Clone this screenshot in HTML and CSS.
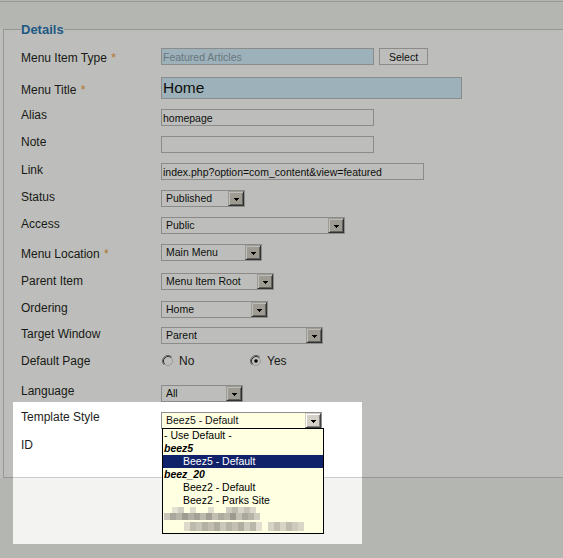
FILE: index.html
```html
<!DOCTYPE html>
<html lang="en">
<head>
<meta charset="utf-8">
<title>Menu Item: Details</title>
<link rel="stylesheet" href="styles.css">
</head>
<body>
<div class="topband"></div>
<div class="content">
  <fieldset class="details">
    <legend>Details</legend>
    <div class="form">
      <div class="lbl">Menu Item Type <span class="star">*</span></div>
      <div class="fld up3"><input class="inp readonly w-type" type="text" value="Featured Articles" readonly><button class="btn" type="button">Select</button></div>

      <div class="lbl">Menu Title <span class="star">*</span></div>
      <div class="fld up6"><input class="inp readonly title" type="text" value="Home"></div>

      <div class="lbl">Alias</div>
      <div class="fld dn1"><input class="inp w-type" type="text" value="homepage"></div>

      <div class="lbl">Note</div>
      <div class="fld dn1"><input class="inp w-type" type="text" value=""></div>

      <div class="lbl">Link</div>
      <div class="fld"><input class="inp w-link" type="text" value="index.php?option=com_content&amp;view=featured"></div>

      <div class="lbl">Status</div>
      <div class="fld"><div class="sel w-status"><span class="txt">Published</span><span class="arrow"><svg width="5" height="3" viewBox="0 0 5 3" shape-rendering="crispEdges"><rect x="0" y="0" width="5" height="1"/><rect x="1" y="1" width="3" height="1"/><rect x="2" y="2" width="1" height="1"/></svg></span></div></div>

      <div class="lbl">Access</div>
      <div class="fld"><div class="sel w-access"><span class="txt">Public</span><span class="arrow"><svg width="5" height="3" viewBox="0 0 5 3" shape-rendering="crispEdges"><rect x="0" y="0" width="5" height="1"/><rect x="1" y="1" width="3" height="1"/><rect x="2" y="2" width="1" height="1"/></svg></span></div></div>

      <div class="lbl">Menu Location <span class="star">*</span></div>
      <div class="fld up3"><div class="sel w-location"><span class="txt">Main Menu</span><span class="arrow"><svg width="5" height="3" viewBox="0 0 5 3" shape-rendering="crispEdges"><rect x="0" y="0" width="5" height="1"/><rect x="1" y="1" width="3" height="1"/><rect x="2" y="2" width="1" height="1"/></svg></span></div></div>

      <div class="lbl">Parent Item</div>
      <div class="fld up1"><div class="sel w-parent"><span class="txt">Menu Item Root</span><span class="arrow"><svg width="5" height="3" viewBox="0 0 5 3" shape-rendering="crispEdges"><rect x="0" y="0" width="5" height="1"/><rect x="1" y="1" width="3" height="1"/><rect x="2" y="2" width="1" height="1"/></svg></span></div></div>

      <div class="lbl">Ordering</div>
      <div class="fld"><div class="sel w-ordering"><span class="txt">Home</span><span class="arrow"><svg width="5" height="3" viewBox="0 0 5 3" shape-rendering="crispEdges"><rect x="0" y="0" width="5" height="1"/><rect x="1" y="1" width="3" height="1"/><rect x="2" y="2" width="1" height="1"/></svg></span></div></div>

      <div class="lbl">Target Window</div>
      <div class="fld"><div class="sel w-target"><span class="txt">Parent</span><span class="arrow"><svg width="5" height="3" viewBox="0 0 5 3" shape-rendering="crispEdges"><rect x="0" y="0" width="5" height="1"/><rect x="1" y="1" width="3" height="1"/><rect x="2" y="2" width="1" height="1"/></svg></span></div></div>

      <div class="lbl">Default Page</div>
      <div class="fld radios">
        <span class="opt"><svg class="radio" width="12" height="12" viewBox="0 0 12 12"><circle cx="6" cy="6" r="4.5" fill="#fff"/><path d="M9.89 2.11A5.5 5.5 0 0 0 2.11 9.89" fill="none" stroke="#808080"/><path d="M2.11 9.89A5.5 5.5 0 0 0 9.89 2.11" fill="none" stroke="#fff"/><path d="M9.18 2.82A4.5 4.5 0 0 0 2.82 9.18" fill="none" stroke="#404040"/><path d="M2.82 9.18A4.5 4.5 0 0 0 9.18 2.82" fill="none" stroke="#d4d0c8"/></svg>No</span>
        <span class="opt"><svg class="radio" width="12" height="12" viewBox="0 0 12 12"><circle cx="6" cy="6" r="4.5" fill="#fff"/><path d="M9.89 2.11A5.5 5.5 0 0 0 2.11 9.89" fill="none" stroke="#808080"/><path d="M2.11 9.89A5.5 5.5 0 0 0 9.89 2.11" fill="none" stroke="#fff"/><path d="M9.18 2.82A4.5 4.5 0 0 0 2.82 9.18" fill="none" stroke="#404040"/><path d="M2.82 9.18A4.5 4.5 0 0 0 9.18 2.82" fill="none" stroke="#d4d0c8"/><circle cx="6" cy="6" r="1.8" fill="#000"/></svg>Yes</span>
      </div>

      <div class="lbl">Language</div>
      <div class="fld dn1"><div class="sel w-language"><span class="txt">All</span><span class="arrow"><svg width="5" height="3" viewBox="0 0 5 3" shape-rendering="crispEdges"><rect x="0" y="0" width="5" height="1"/><rect x="1" y="1" width="3" height="1"/><rect x="2" y="2" width="1" height="1"/></svg></span></div></div>

      <div class="lbl">Template Style</div>
      <div class="fld dn2 tpl">
        <div class="sel open w-template"><span class="txt">Beez5 - Default</span><span class="arrow"><svg width="5" height="3" viewBox="0 0 5 3" shape-rendering="crispEdges"><rect x="0" y="0" width="5" height="1"/><rect x="1" y="1" width="3" height="1"/><rect x="2" y="2" width="1" height="1"/></svg></span></div>
        <div class="dropdown">
          <div class="item">- Use Default -</div>
          <div class="item group">beez5</div>
          <div class="item child selected">Beez5 - Default</div>
          <div class="item group">beez_20</div>
          <div class="item child">Beez2 - Default</div>
          <div class="item child">Beez2 - Parks Site</div>
          <div class="item blur"><svg width="160" height="13" viewBox="0 0 160 13" shape-rendering="crispEdges">
            <rect x="8" y="0" width="6" height="6" fill="#e4e2d2"/><rect x="14" y="0" width="6" height="6" fill="#d2cfc2"/><rect x="26" y="0" width="6" height="6" fill="#dedccd"/><rect x="44" y="0" width="6" height="6" fill="#e0ddcf"/><rect x="62" y="0" width="6" height="6" fill="#cfccbf"/><rect x="68" y="0" width="6" height="6" fill="#bdbaae"/><rect x="74" y="0" width="6" height="6" fill="#d8d5c7"/><rect x="80" y="0" width="6" height="6" fill="#c6c3b6"/><rect x="86" y="0" width="6" height="6" fill="#dcd9cb"/>
            <rect x="0" y="6" width="6" height="7" fill="#c9c6b9"/><rect x="6" y="6" width="6" height="7" fill="#a9a69b"/><rect x="12" y="6" width="6" height="7" fill="#b8b5a9"/><rect x="18" y="6" width="6" height="7" fill="#9f9c92"/><rect x="24" y="6" width="6" height="7" fill="#b2afa3"/><rect x="30" y="6" width="6" height="7" fill="#a4a196"/><rect x="36" y="6" width="6" height="7" fill="#bcb9ad"/><rect x="42" y="6" width="6" height="7" fill="#a19e94"/><rect x="48" y="6" width="6" height="7" fill="#c2bfb2"/><rect x="54" y="6" width="6" height="7" fill="#aeab9f"/><rect x="60" y="6" width="6" height="7" fill="#b9b6aa"/><rect x="66" y="6" width="6" height="7" fill="#9d9a90"/><rect x="72" y="6" width="6" height="7" fill="#c4c1b4"/><rect x="78" y="6" width="6" height="7" fill="#aaa79c"/><rect x="84" y="6" width="6" height="7" fill="#b6b3a7"/><rect x="90" y="6" width="6" height="7" fill="#cfccbf"/>
          </svg></div>
          <div class="item blur"><svg width="160" height="13" viewBox="0 0 160 13" shape-rendering="crispEdges">
            <rect x="20" y="2" width="6" height="9" fill="#dddacb"/><rect x="26" y="2" width="6" height="9" fill="#bcb9ad"/><rect x="32" y="2" width="6" height="9" fill="#c8c5b8"/><rect x="38" y="2" width="6" height="9" fill="#b3b0a4"/><rect x="44" y="2" width="6" height="9" fill="#c1beb1"/><rect x="50" y="2" width="6" height="9" fill="#aeab9f"/><rect x="56" y="2" width="6" height="9" fill="#cbc8bb"/><rect x="62" y="2" width="6" height="9" fill="#b6b3a7"/><rect x="68" y="2" width="6" height="9" fill="#c4c1b4"/><rect x="74" y="2" width="6" height="9" fill="#b0ada1"/><rect x="80" y="2" width="6" height="9" fill="#d0cdc0"/><rect x="86" y="2" width="6" height="9" fill="#bab7ab"/><rect x="92" y="2" width="6" height="9" fill="#e2dfd0"/><rect x="104" y="2" width="6" height="9" fill="#d6d3c5"/><rect x="110" y="2" width="6" height="9" fill="#c2bfb2"/><rect x="116" y="2" width="6" height="9" fill="#d8d5c7"/><rect x="122" y="2" width="6" height="9" fill="#bfbcaf"/><rect x="128" y="2" width="6" height="9" fill="#cdcabd"/><rect x="134" y="2" width="6" height="9" fill="#d9d6c8"/>
          </svg></div>
        </div>
      </div>

      <div class="lbl">ID</div>
      <div class="fld"></div>
    </div>
  </fieldset>
</div>
<div class="spot"></div>
</body>
</html>
```

FILE: styles.css
```css
html, body {
  margin: 0;
  padding: 0;
}

body {
  position: relative;
  width: 563px;
  height: 558px;
  overflow: hidden;
  background: #f3f4f2;
  font-family: "Liberation Sans", Arial, sans-serif;
  color: #1e1e22;
}

.topband {
  height: 27px;
  margin-top: 1px;
  border-top: 1px solid #cccccc;
}

.content {
  display: flow-root;
  background: #ffffff;
  padding-left: 3px;
}

.details {
  margin: -7px 0 0 0;
  padding: 14px 0 25px 17px;
  border: 1px solid #cccccc;
  border-right: none;
  min-width: 0;
}

.details legend {
  padding: 0;
  font-size: 13px;
  line-height: 15px;
  font-weight: bold;
  color: #2a75b5;
}

.form {
  display: grid;
  grid-template-columns: 140px auto;
  grid-template-rows: 32px 25px 27px 28px 27px 27px 30px 27px 27px 26px 27px 30px 26px 28px 14px;
}

.lbl {
  font-size: 12px;
  line-height: 14px;
  align-self: start;
  white-space: nowrap;
}

.star {
  color: #ee9a35;
  margin-left: 1px;
}

.fld {
  align-self: start;
  display: flex;
  align-items: flex-start;
}

.up1 { margin-top: -1px; }
.up3 { margin-top: -3px; }
.up6 { margin-top: -6px; }
.dn1 { margin-top: 1px; }
.dn2 { margin-top: 2px; }

.inp {
  box-sizing: border-box;
  height: 17px;
  margin: 0;
  border: 1px solid #bbbbbb;
  border-radius: 0;
  padding: 0 1px;
  background: #ffffff;
  font-family: "Liberation Sans", Arial, sans-serif;
  font-size: 10.5px;
  color: #111111;
  outline: none;
  appearance: none;
}

.readonly {
  background: #d3edfe;
  color: #8d9eab;
}

.title {
  width: 301px;
  height: 22px;
  font-size: 15.5px;
  color: #111111;
}

.w-type { width: 213px; }
.w-link { width: 263px; }

.btn {
  box-sizing: border-box;
  width: 49px;
  height: 17px;
  margin: 0 0 0 5px;
  padding: 0;
  border: 1px solid #bbbbbb;
  background: #ffffff;
  font-family: "Liberation Sans", Arial, sans-serif;
  font-size: 10.5px;
  color: #111111;
}

.sel {
  box-sizing: border-box;
  height: 17px;
  border: 1px solid #bbbbbb;
  background: #ffffff;
  display: flex;
  align-items: center;
  justify-content: space-between;
  padding-left: 4px;
  font-size: 10.5px;
  color: #111111;
}

.sel .txt {
  white-space: nowrap;
  line-height: 13px;
}

.arrow {
  box-sizing: border-box;
  width: 16px;
  height: 15px;
  flex: none;
  background: #d4d0c8;
  border: 1px solid;
  border-color: #d4d0c8 #404040 #404040 #d4d0c8;
  box-shadow: inset 1px 1px #ffffff, inset -1px -1px #808080;
  display: flex;
  align-items: center;
  justify-content: center;
  padding-top: 1px;
}

.arrow svg {
  display: block;
  fill: #000000;
}

.w-status { width: 84px; }
.w-access { width: 184px; }
.w-location { width: 101px; }
.w-parent { width: 113px; }
.w-ordering { width: 107px; }
.w-target { width: 162px; }
.w-language { width: 82px; }
.w-template { width: 161px; }

.sel.open {
  border-color: #8f8f8f;
  background: #ffffe1;
}

.radios {
  display: flex;
  font-size: 12px;
  line-height: 14px;
}

.opt {
  width: 88px;
  display: flex;
  align-items: center;
  gap: 5px;
}

.radio {
  display: block;
  margin-left: 1px;
}

.tpl {
  position: relative;
}

.dropdown {
  position: absolute;
  left: 1px;
  top: 16px;
  width: 162px;
  box-sizing: border-box;
  border: 1px solid #000000;
  background: #ffffe1;
  z-index: 5;
}

.item {
  height: 13px;
  line-height: 13px;
  font-size: 10.5px;
  color: #000000;
  padding-left: 1px;
  white-space: nowrap;
}

.item.group {
  font-weight: bold;
  font-style: italic;
}

.item.child {
  padding-left: 20px;
}

.item.selected {
  background: #0f226a;
  color: #ffffff;
}

.item.blur svg {
  display: block;
}

.spot {
  position: absolute;
  left: 13px;
  top: 402px;
  width: 349px;
  height: 142px;
  box-shadow: 0 0 0 1200px rgba(6, 10, 0, 0.265);
  pointer-events: none;
  z-index: 10;
}
```
